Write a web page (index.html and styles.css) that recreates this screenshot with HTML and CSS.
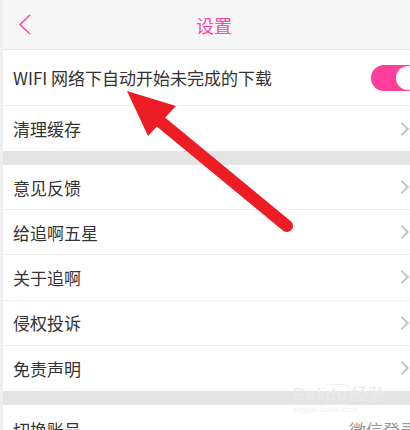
FILE: index.html
```html
<!DOCTYPE html>
<html lang="zh">
<head>
<meta charset="utf-8">
<link rel="stylesheet" href="styles.css">
</head>
<body>
<div class="app">
  <header class="topbar">
    <svg class="back" width="14" height="22" viewBox="0 0 14 22"><polyline points="12,1 2,10.5 12,20" fill="none" stroke="#ff4aa8" stroke-width="1.6"/></svg>
    <div class="title">设置</div>
  </header>
  <section class="group">
    <div class="row tall"><span class="label">WIFI 网络下自动开始未完成的下载</span><span class="toggle"><span class="knob"></span></span></div>
    <div class="row"><span class="label">清理缓存</span><span class="chev"></span></div>
  </section>
  <div class="gap"></div>
  <section class="group">
    <div class="row"><span class="label">意见反馈</span><span class="chev"></span></div>
    <div class="row"><span class="label">给追啊五星</span><span class="chev"></span></div>
    <div class="row"><span class="label">关于追啊</span><span class="chev"></span></div>
    <div class="row"><span class="label">侵权投诉</span><span class="chev"></span></div>
    <div class="row"><span class="label">免责声明</span><span class="chev"></span></div>
  </section>
  <div class="gap"></div>
  <section class="group">
    <div class="row last"><span class="label">切换账号</span><span class="value">微信登录</span></div>
  </section>
</div>
<svg class="arrow" width="410" height="430" viewBox="0 0 410 430">
  <line x1="150" y1="113" x2="287" y2="226" stroke="#ee1c25" stroke-width="12" stroke-linecap="round"/>
  <polygon points="127,91 176,106 148,136" fill="#ee1c25"/>
</svg>
<div class="wm"><div class="wm1">Bai<span class="du">du</span>经验</div><div class="wm2">jingyan.baidu.com</div></div>
</body>
</html>
```
FILE: styles.css
```css
html, body { margin: 0; padding: 0; }
body {
  width: 410px; height: 430px; overflow: hidden;
  background: #efefef;
  font-family: "Noto Sans CJK SC", "Noto Sans", sans-serif;
  position: relative;
}
.app { margin-left: 3px; width: 420px; background: #e4e4e4; }
.topbar {
  height: 49px; border-bottom: 1px solid #e6e6e6;
  background: #f6f6f6; display: flex; align-items: center; justify-content: center;
  position: relative;
}
.back { position: absolute; left: 15px; top: 14px; }
.title { color: #ff4aa8; font-size: 18px; margin-left: 2px; }
.group { background: #fff; }
.row {
  height: 45px; display: flex; align-items: center; justify-content: space-between;
  padding: 0 8px 0 10px; border-bottom: 1px solid #efefef; box-sizing: border-box;
}
.row:last-child { border-bottom: none; }
.row.tall { height: 56px; padding-right: 4px; }
.row.last { height: 50px; }
.group:nth-of-type(2) .row { height: 45.2px; }
.label { font-size: 17px; color: #333; letter-spacing: 0; }
.chev {
  width: 8px; height: 8px; border-right: 2px solid #c6c6c6; border-top: 2px solid #c6c6c6;
  transform: rotate(45deg); margin-right: 8px;
}
.toggle {
  width: 50px; height: 26px; border-radius: 13px; background: #ff3f9a;
  display: flex; align-items: center; justify-content: flex-end; padding: 0 1px; box-sizing: border-box;
  margin-right: -2px;
}
.knob { width: 24px; height: 24px; border-radius: 50%; background: #fff; }
.gap { height: 14px; background: #e4e4e4; }
.value { font-size: 17px; color: #999; margin-right: -2px; }
.arrow { position: absolute; left: 0; top: 0; pointer-events: none; }
.wm { position: absolute; left: 293px; top: 386px; color: rgba(235,235,235,0.85); font-family: "Liberation Sans", sans-serif; line-height: 1.1; }
.wm1 { font-size: 17px; font-weight: bold; letter-spacing: 1px; }
.du { border: 1px solid rgba(235,235,235,0.85); border-radius: 8px; padding: 0 2px; }
.wm2 { font-size: 8px; margin-top: 1px; }
```
